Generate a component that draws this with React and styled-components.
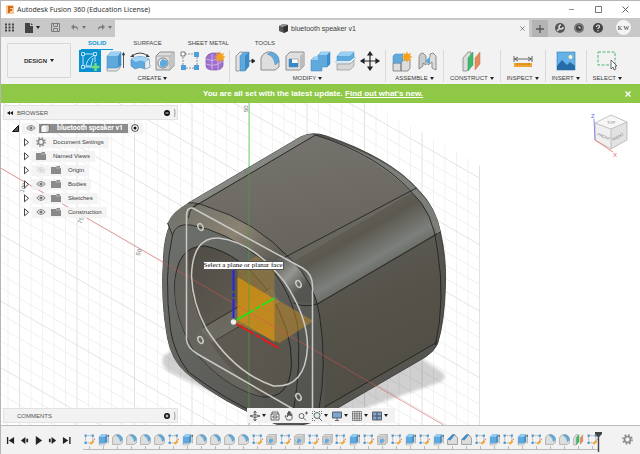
import React from 'react';
import styled, { createGlobalStyle } from 'styled-components';

const Global = createGlobalStyle`
  * { box-sizing: border-box; }
  html, body { margin: 0; }
  body { font-family: "Liberation Sans", Arial, sans-serif; font-size: 6px; color: #3c3c3c; background: #f2f2f2; }
  button { font: inherit; color: inherit; background: none; border: 0; padding: 0; cursor: pointer; }
  ul { list-style: none; margin: 0; padding: 0; }
  svg { display: block; flex: none; }
`;

const Page = styled.div`
  height: 100vh;
  display: flex;
  flex-direction: column;
  border-top: 1px solid #b5b5b5;
  border-left: 1px solid #b5b5b5;
`;

const TitleBar = styled.header`
  display: flex;
  align-items: center;
  height: 17px;
  padding: 0 11px 0 5px;
  gap: 3px;
  background: #fff;
`;
const AppName = styled.h1`
  flex: 1;
  margin: 0;
  font: 400 7px "Noto Sans", sans-serif;
  color: #333;
`;
const WindowButtons = styled.div`
  display: flex;
  gap: 20px;
`;

const TabStrip = styled.div`
  display: flex;
  align-items: stretch;
  height: 19px;
  background: #c8c8c8;
`;
const QuickAccess = styled.nav`
  display: flex;
  align-items: center;
  width: 114px;
  padding: 0 4px;
  gap: 11px;
`;
const MenuPair = styled.button`
  display: flex;
  align-items: center;
  gap: 3px;
  opacity: ${p => (p.$muted ? 0.5 : 1)};
`;
const DocTab = styled.div`
  flex: 1;
  display: flex;
  align-items: center;
  margin-top: 2px;
  padding-right: 4px;
  background: #f2f2f2;
  font-size: 7px;
`;
const DocName = styled.span`
  flex: 1;
  display: flex;
  align-items: center;
  justify-content: center;
  gap: 3px;
`;
const NewTab = styled.button`
  display: grid;
  place-items: center;
  width: 16px;
  margin: 2px 0 0 3px;
  background: #b4b4b4;
`;
const Account = styled.div`
  display: flex;
  align-items: center;
  gap: 9px;
  padding: 0 9px 0 7px;
`;
const Avatar = styled.button`
  width: 15px;
  height: 15px;
  margin-left: 4px;
  border-radius: 50%;
  background: #f4f4f4;
  font: 6px "Liberation Serif", serif;
  color: #222;
`;

const Ribbon = styled.section`
  display: flex;
  height: 47px;
  padding: 0 6px;
  gap: 5px;
`;
const Workspace = styled.button`
  width: 64px;
  height: 35px;
  margin-top: 6px;
  display: flex;
  align-items: center;
  justify-content: center;
  gap: 3px;
  border: 1px solid #d8d8d8;
  border-radius: 1px;
  font-weight: 700;
  color: #333;
`;
const RibbonBody = styled.div`
  flex: 1;
  display: flex;
  flex-direction: column;
`;
const RibbonTabs = styled.div`
  display: flex;
  gap: 26px;
  padding-left: 5px;
  height: 13px;
`;
const RibbonTab = styled.button`
  height: 13px;
  padding: ${p => (p.$active ? '0 7px' : '0')};
  margin-right: ${p => (p.$active ? '-6px' : '0')};
  font-weight: ${p => (p.$active ? 700 : 400)};
  color: ${p => (p.$active ? '#0696d7' : '#444')};
  border-bottom: 1px solid ${p => (p.$active ? '#0696d7' : 'transparent')};
`;
const Groups = styled.div`
  display: flex;
  height: 32px;
`;
const Group = styled.div`
  display: flex;
  flex-direction: column;
  align-items: center;
  justify-content: space-between;
  padding: 1px ${p => p.$pad}px 0;
  border-right: ${p => (p.$last ? '0' : '1px solid #dadada')};
`;
const IconRow = styled.div`
  display: flex;
  gap: 5px;
`;
const ToolButton = styled.button`
  width: 20px;
  height: 20px;
`;
const GroupLabel = styled.button`
  display: flex;
  align-items: center;
  gap: 2px;
  height: 8px;
`;

const Notice = styled.div`
  display: flex;
  align-items: center;
  height: 19px;
  padding-right: 9px;
  background: #8fc846;
  color: #fff;
  font-size: 8px;
  font-weight: 700;
`;
const NoticeText = styled.p`
  flex: 1;
  margin: 0;
  text-align: center;
  a { color: #fff; }
`;

const Viewport = styled.main`
  position: relative;
  flex: 1;
  min-height: 0;
  overflow: hidden;
  background: #fff;
`;
const Scene = styled.svg`
  position: absolute;
  inset: 0;
  width: 100%;
  height: 100%;
`;
const Browser = styled.aside`
  position: absolute;
  top: 2px;
  left: 2px;
  width: 175px;
`;
const PanelBar = styled.div`
  display: flex;
  align-items: center;
  gap: 4px;
  height: 15px;
  padding: 0 1px 0 3px;
  background: #f2f2f2;
  border: 1px solid #e2e2e2;
  color: #555;
`;
const PanelTitle = styled.span`
  flex: 1;
`;
const Tree = styled.ul`
  padding-top: 1px;
`;
const TreeRow = styled.li`
  display: flex;
  align-items: center;
  width: fit-content;
  height: 14px;
  margin-left: ${p => p.$indent}px;
  gap: 3px;
`;
const TreeStrip = styled.span`
  display: flex;
  align-items: center;
  height: 11px;
  gap: ${p => (p.$root ? 3 : 5)}px;
  padding: 0 ${p => (p.$root ? 4 : 5)}px 0 4px;
  background: rgba(242, 242, 242, 0.85);
`;
const TreeName = styled.span`
  padding-left: 2px;
`;
const RootName = styled.span`
  display: flex;
  align-items: center;
  gap: 7px;
  height: 9px;
  padding: 0 5px 0 1px;
  background: #8c8c8c;
  color: #fff;
  font: 700 7px Roboto, sans-serif;
`;
const Comments = styled.aside`
  position: absolute;
  left: 2px;
  bottom: 2px;
  width: 175px;
`;
const CommentsTitle = styled(PanelTitle)`
  padding-left: 10px;
`;
const Hint = styled.div`
  position: absolute;
  left: calc(50% - 118px);
  top: calc(50% - 3px);
  height: 9px;
  padding: 0;
  border: 1px solid #555;
  background: #fff;
  color: #000;
  font: 7px/7px "Liberation Serif", serif;
  white-space: nowrap;
`;
const NavBar = styled.nav`
  position: absolute;
  left: 50%;
  bottom: 2px;
  transform: translateX(-50%);
  display: flex;
  align-items: center;
  gap: 4px;
  height: 15px;
  padding: 0 7px 0 3px;
  background: #f2f2f2;
`;
const NavButton = styled(MenuPair)`
  gap: 2px;
`;
const ViewCube = styled.svg`
  position: absolute;
  top: 5px;
  right: 10px;
`;

const Timeline = styled.footer`
  display: flex;
  align-items: flex-start;
  height: 29px;
  padding: 8px 7px 0 4px;
  border-top: 1px solid #bcbcbc;
`;
const Playback = styled.div`
  display: flex;
  gap: 4px;
  margin-right: 12px;
`;
const PlayButton = styled.button`
  width: 10px;
  height: 12px;
  display: grid;
  place-items: center;
`;
const Track = styled.ul`
  flex: 1;
  display: grid;
  grid-template-columns: repeat(37, 1fr);
`;
const Feature = styled.li`
  display: flex;
  flex-direction: column;
  align-items: center;
  height: 16px;
  border-bottom: 1px solid #bbb;
  &::after { content: ""; width: 1px; height: 3px; margin-top: 1px; background: #bbb; }
`;
const Marker = styled.div`
  margin: -2px 20px 0 -4px;
`;

const caret = <svg width="4" height="3" viewBox="0 0 4 3"><path d="M0 0h4L2 3z" fill="#222" /></svg>;

const BLUE = '#5fa9dd';
const art = {
  sketch: (
    <>
      <rect x="-1" y="-1" width="22" height="22" fill="#0a8fcf" />
      <path d="M3 3h12M3 3v13M15 3v8M3 16h9M6 15C7 9 10 6 15 4M6 15h5l2-8" fill="none" stroke="#d8efff" strokeWidth=".9" />
      <path d="M1.500 1.500h3v3h-3zM13.500 1.500h3v3h-3zM1.500 14.500h3v3h-3z" fill="#0a8fcf" stroke="#fff" strokeWidth=".7" />
      <path d="M15.500 12v8M11.500 16h8" stroke="#72de79" strokeWidth="2.400" />
    </>
  ),
  extrude: (
    <>
      <path d="M2 17l3-4h11l-1 4-3 3H2z" fill="#e4e4e4" stroke="#777" strokeWidth=".6" />
      <path d="M2 5l4-4h10v13l-4 3H2z" fill={BLUE} stroke="#3e83b8" strokeWidth=".5" />
      <path d="M2 5l4-4h10l-3 4z" fill="#9ad0f3" /><path d="M13 5l3-4v13l-3 3z" fill="#3f8fcb" />
      <path d="M18.500 17V3M17.500 4L18.500 1.500 19.500 4z" stroke="#333" strokeWidth=".8" fill="#333" />
    </>
  ),
  revolve: (
    <>
      <path d="M2 5Q10-1 18 5" fill="none" stroke="#444" strokeWidth="1" /><path d="M0 6l3-3 1 3zM20 6l-3-3-1 3z" fill="#333" />
      <path d="M1 8q9-5 18 0l1 8-5 2q-5-3-10 0l-4-3z" fill={BLUE} stroke="#4386b8" strokeWidth=".6" />
      <path d="M1 8q9-5 18 0l-4 3q-5-3-9 0z" fill="#a2d5f5" /><path d="M15 11l4-3 1 8-5 2z" fill="#e6eef3" stroke="#888" strokeWidth=".4" />
    </>
  ),
  hole: (
    <>
      <path d="M1 5l4-4h14v14l-4 4H1z" fill="#dcdcdc" stroke="#777" strokeWidth=".8" />
      <path d="M1 5h14v14M15 5l4-4" fill="none" stroke="#888" strokeWidth=".6" /><path d="M15 5l4-4v14l-4 4z" fill="#c4c4c4" />
      <circle cx="8" cy="12" r="5" fill="#f8f8f8" stroke="#666" strokeWidth=".8" /><path d="M6 16A5 5 0 0 0 12.500 10L8 8a5 5 0 0 0-2 8z" fill={BLUE} />
    </>
  ),
  pattern: (
    <>
      <path d="M5 3h9M3 6v8M6 17h9M17 6v8" stroke="#777" strokeDasharray="2 1" strokeWidth=".8" fill="none" />
      <path d="M1 1h4v4H1z" fill="#fff" stroke="#555" strokeWidth=".8" />
      <path d="M14 1h5v5h-5zM1 14h5v5H1zM14 14h5v5h-5z" fill="#4c9fd8" />
    </>
  ),
  form: (
    <>
      <path d="M1 7q1-4 6-5h7q4 1 4 5v8q-2 4-6 4H6q-5-1-5-4z" fill="#a070cf" stroke="#7345a3" strokeWidth=".6" />
      <path d="M1 8q5 3 12 0l5-3M1 13q6 3 12 0l5-3M7 3v16M13 8v11" fill="none" stroke="#d7bdf0" strokeWidth=".8" />
      <path d="M15 0l1 3 3-1-1 3 3 1-3 1 1 3-3-1-1 3-1-3-3 1 1-3-3-1 3-1-1-3 3 1z" fill="#f5a11c" />
    </>
  ),
  press: (
    <>
      <path d="M1 5l4-4h3v15l-4 4H1z" fill="#e2e2e2" stroke="#777" strokeWidth=".7" />
      <path d="M5 5l4-4h5v14l-4 5H5z" fill={BLUE} stroke="#3e83b8" strokeWidth=".5" /><path d="M10 5l4-4v14l-4 5z" fill="#398bc9" />
      <path d="M14 10h4M17 8l3 2-3 2z" stroke="#222" strokeWidth=".8" fill="#222" />
    </>
  ),
  fillet: (
    <>
      <path d="M1 19V7q1-4 6-6h4q8 2 8 9v6l-4 3z" fill="#dedede" stroke="#777" strokeWidth=".8" />
      <path d="M7 3l4-2q8 2 8 10l-4 3Q14 5 7 3z" fill={BLUE} stroke="#458abb" strokeWidth=".4" />
    </>
  ),
  shell: (
    <>
      <path d="M1 5l4-4h14v14l-4 4H1z" fill="#dfdfdf" stroke="#777" strokeWidth=".8" /><path d="M15 5l4-4v14l-4 4z" fill="#bcbcbc" />
      <path d="M4 8h9v8H4z" fill="#fff" stroke="#777" strokeWidth=".5" /><path d="M4 8h3v4h6v4H4z" fill="#368acb" />
    </>
  ),
  combine: (
    <>
      <path d="M1 9l3-3h4V4l3-3h9v12l-3 3h-5v4H1z" fill={BLUE} stroke="#3e83b8" strokeWidth=".5" />
      <path d="M8 4l3-3h9l-3 3zM1 9l3-3h4v3z" fill="#9ad0f3" /><path d="M17 4l3-3v12l-3 3z" fill="#3c8dcb" />
    </>
  ),
  split: (
    <>
      <path d="M2 5l4-4h13v6l-4 4H2z" fill={BLUE} stroke="#4388ba" strokeWidth=".5" /><path d="M2 5l4-4h13l-4 4z" fill="#9ad0f3" />
      <path d="M1 10h14l5-4v2l-4 4H1z" fill="#fff" stroke="#64a8d5" strokeWidth=".5" />
      <path d="M2 13h13l4-4v6l-4 4H2z" fill="#d7d7d7" stroke="#888" strokeWidth=".6" />
    </>
  ),
  move: <path d="M10 3v14M3 10h14M8 4l2-3 2 3zM8 16l2 3 2-3zM4 8l-3 2 3 2zM16 8l3 2-3 2z" stroke="#222" strokeWidth="1.200" fill="#222" />,
  component: (
    <>
      <path d="M1 12h8v8H1zM9 9h7l2-1v9l-2 3H9z" fill="#ddd" stroke="#777" strokeWidth=".8" />
      <path d="M1 5l2-2h8v7l-2 2H1z" fill={BLUE} stroke="#4388ba" strokeWidth=".5" />
      <path d="M15 0l1 3 3-1-1 3 3 1-3 1 1 3-3-1-1 3-1-3-3 1 1-3-3-1 3-1-1-3 3 1z" fill="#f5a11c" />
    </>
  ),
  joint: (
    <>
      <path d="M2 18V7q0-5 4-5l3 3v9l-3-2v3z" fill="#ccc" stroke="#777" strokeWidth=".8" />
      <path d="M11 8l2-2V3l3-1 3 3v14l-4-2v-6l-4 3z" fill="#ddd" stroke="#777" strokeWidth=".8" /><path d="M8 10l5-4v7z" fill={BLUE} />
    </>
  ),
  construct: (
    <>
      <path d="M1 7l5-6h3v14l-4 5H1z" fill="#ddd" stroke="#777" strokeWidth=".7" />
      <path d="M6 7l5-6v13l-5 6z" fill="#3fba6d" stroke="#31965a" strokeWidth=".5" />
      <path d="M13 7l5-6v12l-5 6z" fill="#e58a5f" stroke="#c67550" strokeWidth=".5" />
    </>
  ),
  inspect: (
    <>
      <path d="M1 5v6M19 5v6M2 8h16M5 6L1.500 8 5 10M15 6l3.500 2-3.500 2" stroke="#444" strokeWidth=".8" fill="none" />
      <rect x="1" y="12" width="18" height="4" fill="#f1a52b" /><path d="M4 12v2M7 12v2M10 12v2M13 12v2M16 12v2" stroke="#84570f" strokeWidth=".6" />
    </>
  ),
  insert: (
    <>
      <rect x="1" y="1" width="18" height="18" fill="#65b2e9" stroke="#357eb2" strokeWidth=".6" />
      <path d="M1 15l5-6 5 5 3-3 5 4v4H1z" fill="#246ba7" /><circle cx="14.500" cy="6" r="2" fill="#fff4bd" />
    </>
  ),
  select: (
    <>
      <rect x="1" y="1" width="17" height="13" fill="none" stroke="#48b772" strokeDasharray="3 1.500" strokeWidth="1" />
      <path d="M14 9v9l2-2 1 3 2-1-1-3h2z" fill="#fff" stroke="#333" strokeWidth=".7" />
    </>
  ),
  tlSketch: (
    <>
      <path d="M3 3h13v13H3z" fill="none" stroke="#777" strokeWidth="1" strokeDasharray="3 1" />
      <path d="M1 1h4v4H1zM14 1h4v4h-4zM1 14h4v4H1z" fill="#499bd7" />
      <path d="M10 18l6-7 3 2-5 6z" fill="#f2a72e" /><path d="M17 10l2-2 1 3z" fill="#d65b4a" />
    </>
  ),
  chamfer: (
    <>
      <path d="M1 19v-9l9-9h4l5 6v12z" fill="#ddd" stroke="#666" strokeWidth="1" /><path d="M1 10l9-9h5l-9 11z" fill="#398ed0" />
    </>
  ),
};
const Art = ({ name, size = 20 }) => (
  <svg width={size} height={size} viewBox="0 0 20 20" overflow="visible" aria-hidden="true">{art[name]}</svg>
);

const groups = [
  { label: 'CREATE', pad: 4, icons: ['sketch', 'extrude', 'revolve', 'hole', 'pattern', 'form'] },
  { label: 'MODIFY', pad: 5, icons: ['press', 'fillet', 'shell', 'combine', 'split', 'move'] },
  { label: 'ASSEMBLE', pad: 6, icons: ['component', 'joint'] },
  { label: 'CONSTRUCT', pad: 6, icons: ['construct'] },
  { label: 'INSPECT', pad: 6, icons: ['inspect'] },
  { label: 'INSERT', pad: 6, icons: ['insert'] },
  { label: 'SELECT', pad: 6, icons: ['select'] },
];

const S = 'tlSketch', E = 'extrude', F = 'fillet', H = 'hole', C = 'chamfer';
const features = [S, E, F, F, F, F, S, E, F, F, F, F, S, H, S, H, S, H, S, E, S, H, S, E, S, E, C, C, S, E, S, E, S, F, F, 'construct', S];

const Cross = ({ size = 6, color = '#555' }) => (
  <svg width={size} height={size} viewBox="0 0 6 6"><path d="M.5.5l5 5M5.500.5l-5 5" stroke={color} strokeWidth={color === '#fff' ? 1.3 : 0.8} /></svg>
);
const Eye = ({ off }) => (
  <svg width="10" height="8" viewBox="0 0 10 8" opacity={off ? 0.25 : 1}>
    <path d="M1 4q4-5 8 0-4 5-8 0z" fill="none" stroke="#888" strokeWidth="1.200" /><circle cx="5" cy="4" r="1.600" fill="#777" />
    {off && <path d="M1 1l8 6" stroke="#777" />}
  </svg>
);
const Folder = () => (
  <svg width="10" height="8" viewBox="0 0 10 8"><path d="M0 1h5l1-1h3v2h1v6H0z" fill="#8a8a8a" /><path d="M5 2h4" stroke="#ddd" strokeWidth=".6" /></svg>
);
const Gear = ({ size = 10 }) => (
  <svg width={size} height={size} viewBox="0 0 10 10">
    <circle cx="5" cy="5" r="4.200" fill="none" stroke="#888" strokeWidth="1.300" strokeDasharray="1.650 1.650" />
    <circle cx="5" cy="5" r="2.700" fill="none" stroke="#888" strokeWidth="1.500" />
  </svg>
);
const Expand = () => (
  <svg width="5" height="9" viewBox="0 0 5 9"><path d="M.5.8v7L4.500 4.300z" fill="#fff" stroke="#333" strokeWidth=".9" /></svg>
);
const Dot = ({ plus }) => (
  <svg width="6" height="6" viewBox="0 0 6 6"><circle cx="3" cy="3" r="3" fill="#111" /><path d={plus ? 'M1.500 3h3M3 1.500v3' : 'M1.500 3h3'} stroke="#fff" strokeWidth=".9" /></svg>
);
const Grip = () => <svg width="2" height="8" viewBox="0 0 2 8"><path d="M.5 0q1 4 0 8" stroke="#888" fill="none" strokeWidth=".8" /></svg>;

const rows = [
  { name: 'Document Settings', icon: 'gear' },
  { name: 'Named Views', icon: 'folder' },
  { name: 'Origin', eye: 'off' },
  { name: 'Bodies', eye: 'on' },
  { name: 'Sketches', eye: 'on' },
  { name: 'Construction', eye: 'on' },
];

const STEP = 11.5;
const verticals = Array.from({ length: 42 }, (_, i) => ({ x: 249 + (i - 21) * STEP, major: (i - 21) % 5 === 0 }));
const slants = Array.from({ length: 50 }, (_, i) => ({ y: 168 + (i - 27) * 13.3, major: (i - 27) % 5 === 0 }));
const holes = [[200, 227], [298, 284], [200, 340], [298, 397]];

const Model = () => (
  <Scene viewBox="0 103 640 322" preserveAspectRatio="xMidYMid slice" role="img" aria-label="Speaker model">
    <defs>
      <clipPath id="plane"><path d="M0 103H370L480 166V425H0z" /></clipPath>
      <linearGradient id="top" x1="0" y1="0" x2=".3" y2="1"><stop offset="0" stopColor="#77756f" /><stop offset="1" stopColor="#67645d" /></linearGradient>
      <linearGradient id="edge" gradientUnits="userSpaceOnUse" x1="345" y1="215" x2="380" y2="275">
        <stop offset="0" stopColor="#65625a" /><stop offset=".35" stopColor="#5b5850" /><stop offset=".75" stopColor="#7c7f7b" /><stop offset="1" stopColor="#62635e" />
      </linearGradient>
      <linearGradient id="side" x1="0" y1="0" x2=".3" y2="1"><stop offset="0" stopColor="#5e5f5b" /><stop offset=".5" stopColor="#555249" /><stop offset="1" stopColor="#504d45" /></linearGradient>
      <linearGradient id="face" x1="0" y1="0" x2="1" y2="1"><stop offset="0" stopColor="#70736f" /><stop offset=".5" stopColor="#5f605c" /><stop offset="1" stopColor="#50514d" /></linearGradient>
      <linearGradient id="lip" x1="0" y1="0" x2="1" y2=".7"><stop offset="0" stopColor="#6e706b" /><stop offset=".45" stopColor="#8b8272" /><stop offset=".75" stopColor="#5c5a55" /><stop offset=".88" stopColor="#94968f" /><stop offset="1" stopColor="#555651" /></linearGradient>
      <linearGradient id="bore" x1="0" y1="0" x2="1" y2="1"><stop offset="0" stopColor="#4d4a44" /><stop offset=".5" stopColor="#5e5a51" /><stop offset="1" stopColor="#57544b" /></linearGradient>
      <filter id="soft"><feGaussianBlur stdDeviation="1.500" /></filter>
    </defs>
    <g clipPath="url(#plane)">
      {verticals.map(v => <path key={v.x} d={`M${v.x} 103V425`} stroke={v.major ? '#dadada' : '#f0f0f0'} strokeWidth=".8" />)}
      {slants.map(s => <path key={s.y} d={`M0 ${s.y}l640 369`} stroke={s.major ? '#dcdcdc' : '#ececec'} strokeWidth=".8" />)}
    </g>
    <path d="M163 356Q158 368 175 375L270 420H330L440 382Q448 376 440 371L420 358 320 340 180 345z" fill="#000" opacity=".18" filter="url(#soft)" />
    <path d="M248.500 103V425" stroke="#6fdc6f" />
    <path d="M188 203L300 137Q312 131 326 136Q390 158 418 190Q435 207 440 232Q446 258 445 285Q444 322 437 344Q434 351 425 357L320 418Q300 430 275 424Q220 402 186 373Q171 360 167 338Q160 300 163 258Q164 218 188 203z" fill="#55544e" stroke="#333" strokeWidth=".8" />
    <path d="M188 203L300 137Q307 133 315 135L197 204z" fill="#868883" />
    <path d="M197 204L315 135Q380 155 411 193L291 263Q250 222 197 204z" fill="url(#top)" />
    <path d="M291 263L411 193Q432 210 438 232L317 304Q308 278 291 263z" fill="url(#edge)" />
    <path d="M317 303L437 233Q446 290 435 343L324 408Q326 350 317 303z" fill="url(#side)" />
    <path d="M315 135Q390 158 416 189Q436 208 440 232L437 235Q431 211 410 192Q375 156 315 135z" fill="#7b7e79" />
    <path d="M188 203Q195 202 205 206Q255 221 291 260Q314 282 319 315Q327 365 318 412Q300 430 275 424Q220 402 186 373Q171 360 167 338Q160 300 163 258Q164 218 188 203z" fill="url(#face)" />
    <path d="M188 203Q195 202 205 206Q255 221 291 260Q310 278 317 304L296 302Q285 275 255 254Q215 226 180 225L171 235L167 223Q172 211 188 203z" fill="url(#lip)" />
    <g fill="none" stroke="#1c1c1a" strokeWidth=".8">
      <path d="M188 203Q195 202 205 206Q255 221 291 260Q314 282 319 315Q327 365 318 412" />
      <path d="M193 207L315 135Q378 155 411 192Q433 212 437 250Q445 300 435 345M283 258L416 188M293 303Q304 308 317 304L440 232M324 407L437 342" />
      <path d="M167 223L172 235Q175 223 190 225Q225 231 258 257Q288 281 297 325Q301 365 293 410M172 235Q163 275 170 330Q174 354 188 372Q225 400 262 416" />
      <path d="M197 204Q189 207 188 218M267 421L301 411" />
    </g>
    <path d="M174 288Q175 245 205 246Q241 254 268 292Q292 329 291 365Q289 399 262 397Q224 388 193 350Q174 318 174 288z" fill="url(#bore)" stroke="#1d1d1b" strokeWidth=".9" />
    <path d="M174 288Q175 262 188 250Q186 300 210 342Q225 368 262 397Q224 388 193 350Q174 318 174 288z" fill="#6b6a64" opacity=".7" />
    <path d="M200 330L271 288L280 303L212 343z" fill="#77746c" opacity=".6" />
    <path d="M203 327L270 288M214 341L279 303" stroke="#24231f" strokeWidth=".7" />
    <path d="M237 268L256 256L274 268V298L237 320z" fill="#9c7b36" opacity=".6" />
    <path d="M237 277L274 299V342L237 320z" fill="#d29110" opacity=".8" />
    <path d="M233 322L274 298L313 321L279 343z" fill="#c58b22" opacity=".5" />
    <path d="M0 168L443 425" stroke="#d9534f" strokeWidth=".7" opacity=".75" />
    <path d="M248.500 170V408" stroke="#45a33f" strokeWidth=".7" />
    <g fill="none" stroke="#c9c9c6" strokeWidth="1.500">
      <path d="M192 208L302 268Q312 274 312 286V412M192 208Q186 207 186 216V340Q187 348 197 354L296 411" />
      <path d="M191 276Q192 237 218 238Q253 242 284 282Q307 316 307 347Q305 388 273 386Q234 373 206 329Q192 303 191 276z" />
      {holes.map(([x, y]) => <ellipse key={`${x}-${y}`} cx={x} cy={y} rx="2.400" ry="3.600" transform={`rotate(-25 ${x} ${y})`} />)}
    </g>
    <g fill="none" strokeWidth="1.800">
      <path d="M233 268V318" stroke="#2020f0" strokeDasharray="23 2 4 2" />
      <path d="M236 320L274 298" stroke="#19e619" strokeDasharray="20 2 5 2" />
      <path d="M236 324L278 348" stroke="#ec1717" strokeDasharray="20 2 5 2" />
    </g>
    <circle cx="233" cy="322" r="2.700" fill="#eee" />
    <g fill="#777" fontSize="6">
      <text transform="translate(23 193) rotate(-70)">100</text><text transform="translate(81 224) rotate(-70)">75</text>
      <text transform="translate(139 256) rotate(-70)">50</text><text transform="translate(247 175) rotate(-90)">25</text>
      <text transform="translate(247 112) rotate(-90)">50</text>
    </g>
  </Scene>
);

const navArt = {
  orbit: <path d="M5 0v10M0 5q5-3 10 0-5 3-10 0zM3.500 2L5 0l1.500 2M3.500 8L5 10l1.500-2" />,
  look: <path d="M1 3h8v6H1zM2 3V1h6v2M3 5h4v2H3z" />,
  pan: <path d="M3 9L1 5l1-.5L3.500 6V2l1-.5v3-4l1.200 0v4-3.500l1.200.5v3.500-2l1.100.5v4L7 9z" />,
  zoom: <path d="M6 5a2.500 2.500 0 1 1-5 0 2.500 2.500 0 0 1 5 0zM5.500 7L8 9.500M7 2h3M8.500.5v3" />,
  fit: <><path d="M.5 3V.5H3M7 .5h2.500V3M.5 7v2.500H3" strokeDasharray="1 1" /><path d="M8 4.500a3 3 0 1 1-6 0 3 3 0 0 1 6 0zM7 7l3 3" fill="#dcecf0" /></>,
  display: <><path d="M.5 1h9v6h-9z" fill="#7ea4d4" /><path d="M5 7v2M3 9.500h4" /></>,
  grid: <path d="M.5.5h9v9h-9zM2.800.5v9M5 .5v9M7.300.5v9M.5 2.800h9M.5 5h9M.5 7.300h9" strokeWidth=".6" />,
  views: <><path d="M.5 1h9v8h-9z" fill="#7ea4d4" /><path d="M5 1v8M.5 5h9" /></>,
};
const navItems = [['orbit', 1], ['look'], ['pan'], ['zoom'], ['fit', 1], ['display', 1], ['grid', 1], ['views', 1]];

const playArt = {
  'Go to start': 'M1 1h1.500v8H1zM9 1v8L3 5z',
  'Step back': 'M6 1v8L1 5zM7 3h2v4H7z',
  Play: 'M2 0v10l7-5z',
  'Step forward': 'M4 1v8l5-4zM1 3h2v4H1z',
  'Go to end': 'M8 1h1.500v8H8zM1 1v8l6-4z',
};

export default function App() {
  return (
    <Page>
      <Global />
      <TitleBar>
        <svg width="8" height="9" viewBox="0 0 8 9"><path d="M0 0h7l1 2v7H0z" fill="#f9c89a" /><path d="M2 8V1h5v2H4v1h2v2H4v2z" fill="#d66a13" /></svg>
        <AppName>Autodesk Fusion 360 (Education License)</AppName>
        <WindowButtons>
          <button aria-label="Minimize"><svg width="7" height="7" viewBox="0 0 7 7"><path d="M1 3.500h5" stroke="#777" strokeWidth=".8" /></svg></button>
          <button aria-label="Maximize"><svg width="7" height="7" viewBox="0 0 7 7"><path d="M.5.5h6v6h-6z" fill="none" stroke="#555" strokeWidth=".8" /></svg></button>
          <button aria-label="Close"><Cross size={7} /></button>
        </WindowButtons>
      </TitleBar>
      <TabStrip>
        <QuickAccess>
          <MenuPair aria-label="Data panel"><svg width="9" height="9" viewBox="0 0 9 9"><path d="M0 1.500h9M0 4.500h9M0 7.500h9" stroke="#444" strokeWidth="2" strokeDasharray="2 1.500" /></svg></MenuPair>
          <MenuPair aria-label="File"><svg width="8" height="10" viewBox="0 0 8 10"><path d="M0 0h5v3h3v7H0zM6 0l2 2H6z" fill="#444" /></svg>{caret}</MenuPair>
          <MenuPair $muted aria-label="Save"><svg width="9" height="9" viewBox="0 0 9 9"><path d="M.5.5h8v8h-8zM2.500.5v3h4v-3M2.500 8.500v-3h4v3" fill="none" stroke="#333" /></svg></MenuPair>
          <MenuPair $muted aria-label="Undo"><svg width="8" height="7" viewBox="0 0 8 7"><path d="M3 0L0 3l3 3V4q3-1 4 3 1-5-4-5z" fill="#333" /></svg>{caret}</MenuPair>
          <MenuPair $muted aria-label="Redo"><svg width="8" height="7" viewBox="0 0 8 7"><path d="M5 0l3 3-3 3V4Q2 3 1 7 0 2 5 2z" fill="#333" /></svg>{caret}</MenuPair>
        </QuickAccess>
        <DocTab>
          <DocName>
            <svg width="9" height="9" viewBox="0 0 9 9"><path d="M0 2l4-2 5 1v6L5 9 0 7z" fill="#555" /><path d="M0 2l4-2 5 1-5 2z" fill="#999" /><path d="M4 3l5-2v6L5 9z" fill="#333" /></svg>
            bluetooth speaker v1
          </DocName>
          <button aria-label="Close tab"><Cross size={5} /></button>
        </DocTab>
        <NewTab aria-label="New tab"><svg width="8" height="8" viewBox="0 0 8 8"><path d="M4 0v8M0 4h8" stroke="#555" strokeWidth="1.300" /></svg></NewTab>
        <Account>
          <button aria-label="Extensions"><svg width="10" height="10" viewBox="0 0 10 10"><circle cx="5" cy="5" r="5" fill="#555" /><path d="M2 8l3-3M8 4a2 2 0 1 1-2-2" stroke="#ddd" strokeWidth="1.500" fill="none" /></svg></button>
          <button aria-label="Job status"><svg width="10" height="10" viewBox="0 0 10 10"><circle cx="5" cy="5" r="5" fill="#777" /><circle cx="5" cy="5" r="3" fill="#444" /><path d="M5 3v2h2" stroke="#ddd" fill="none" /></svg></button>
          <button aria-label="Help"><svg width="10" height="10" viewBox="0 0 10 10"><circle cx="5" cy="5" r="5" fill="#444" /><path d="M3.500 4q0-2 1.500-2t1.500 1.500Q6.500 4.500 5 5.500V6M5 7v1.200" stroke="#eee" strokeWidth="1.100" fill="none" /></svg></button>
          <Avatar>K W</Avatar>
        </Account>
      </TabStrip>
      <Ribbon>
        <Workspace>DESIGN {caret}</Workspace>
        <RibbonBody>
          <RibbonTabs>
            <RibbonTab $active>SOLID</RibbonTab>
            <RibbonTab>SURFACE</RibbonTab>
            <RibbonTab>SHEET METAL</RibbonTab>
            <RibbonTab>TOOLS</RibbonTab>
          </RibbonTabs>
          <Groups>
            {groups.map((g, i) => (
              <Group key={g.label} $pad={g.pad} $last={i === groups.length - 1}>
                <IconRow>{g.icons.map(n => <ToolButton key={n} aria-label={n}><Art name={n} /></ToolButton>)}</IconRow>
                <GroupLabel>{g.label} {caret}</GroupLabel>
              </Group>
            ))}
          </Groups>
        </RibbonBody>
      </Ribbon>
      <Notice>
        <NoticeText>You are all set with the latest update. <a href="#new">Find out what's new.</a></NoticeText>
        <button aria-label="Dismiss"><Cross size={6} color="#fff" /></button>
      </Notice>
      <Viewport>
        <Model />
        <Browser>
          <PanelBar>
            <svg width="6" height="4" viewBox="0 0 6 4"><path d="M3 0v4L0 2zM6 0v4L3 2z" fill="#111" /></svg>
            <PanelTitle>BROWSER</PanelTitle>
            <Dot /><Grip />
          </PanelBar>
          <Tree>
            <TreeRow $indent={9}>
              <svg width="7" height="7" viewBox="0 0 7 7"><path d="M6.500.5v6h-6z" fill="#555" stroke="#111" /></svg>
              <TreeStrip $root>
                <Eye />
                <RootName>
                  <svg width="10" height="9" viewBox="0 0 10 9"><path d="M1 2l2-1h6v6L7 8.500H1z" fill="#f5f5f5" stroke="#555" strokeWidth=".6" /><path d="M7 2v6" stroke="#999" strokeWidth=".6" /></svg>
                  bluetooth speaker v1
                </RootName>
                <svg width="8" height="8" viewBox="0 0 8 8"><circle cx="4" cy="4" r="3.400" fill="#fff" stroke="#222" strokeWidth=".8" /><circle cx="4" cy="4" r="1.500" fill="#111" /></svg>
              </TreeStrip>
            </TreeRow>
            {rows.map(r => (
              <TreeRow key={r.name} $indent={21}>
                <Expand />
                <TreeStrip>
                  {r.icon === 'gear' && <Gear />}
                  {r.icon === 'folder' && <Folder />}
                  {r.eye && <><Eye off={r.eye === 'off'} /><Folder /></>}
                  <TreeName>{r.name}</TreeName>
                </TreeStrip>
              </TreeRow>
            ))}
          </Tree>
        </Browser>
        <Comments>
          <PanelBar><CommentsTitle>COMMENTS</CommentsTitle><Dot plus /><Grip /></PanelBar>
        </Comments>
        <Hint>Select a plane or planar face</Hint>
        <NavBar>
          {navItems.map(([n, menu]) => (
            <NavButton key={n} aria-label={n}>
              <svg width="10" height="10" viewBox="0 0 10 10" fill="none" stroke="#444" strokeWidth=".8">{navArt[n]}</svg>
              {menu && caret}
            </NavButton>
          ))}
        </NavBar>
        <ViewCube width="42" height="50" viewBox="588 108 42 50">
          <path d="M595 123l16-8 16 7-16 7z" fill="#f7f7f7" /><path d="M595 123l16 6v20l-16-9z" fill="#efefef" /><path d="M611 129l16-7v18l-16 9z" fill="#e2e2e2" />
          <path d="M595 123l16-8 16 7v18l-16 9-16-9zM595 123l16 6 16-7M611 129v20" fill="none" stroke="#b4b4b4" strokeWidth=".8" />
          <path d="M594 119l1 21" stroke="#7070ee" strokeWidth=".8" /><path d="M595 140l18 12" stroke="#ed6868" strokeWidth=".8" />
          <text x="591" y="118" fontSize="6" fill="#6666ec">Z</text><text x="613" y="157" fontSize="6" fill="#ec6262">X</text>
          <g fill="#777" fontSize="4"><text x="607" y="124">TOP</text><text transform="translate(597 135) rotate(24)">FRONT</text><text transform="translate(613 141) rotate(-27)">RIGHT</text></g>
        </ViewCube>
      </Viewport>
      <Timeline>
        <Playback>
          {Object.entries(playArt).map(([n, d]) => (
            <PlayButton key={n} aria-label={n}><svg width="9" height="9" viewBox="0 0 10 10"><path d={d} fill="#222" /></svg></PlayButton>
          ))}
        </Playback>
        <Track>{features.map((f, i) => <Feature key={i}><Art name={f} size={11} /></Feature>)}</Track>
        <Marker><svg width="7" height="20" viewBox="0 0 7 20"><path d="M0 0h7v2L4.200 5v15H2.800V5L0 2z" fill="#444" /></svg></Marker>
        <button aria-label="Timeline settings"><Gear size={11} /></button>
      </Timeline>
    </Page>
  );
}
